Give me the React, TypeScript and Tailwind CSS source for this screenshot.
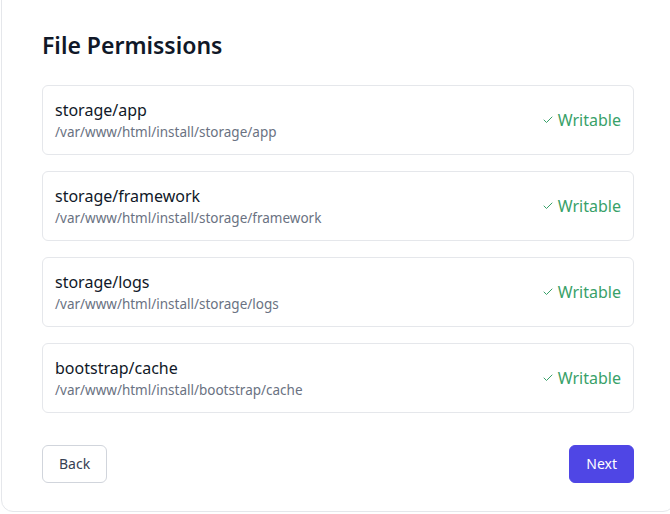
import { Check } from 'lucide-react';

type Perm = {
  name: string;
  path: string;
};

const perms: Perm[] = [
  { name: 'storage/app', path: '/var/www/html/install/storage/app' },
  { name: 'storage/framework', path: '/var/www/html/install/storage/framework' },
  { name: 'storage/logs', path: '/var/www/html/install/storage/logs' },
  { name: 'bootstrap/cache', path: '/var/www/html/install/bootstrap/cache' },
];

function PermRow({ perm }: { perm: Perm }) {
  return (
    <div className="flex items-center justify-between rounded-md border border-gray-200 bg-white px-3 py-3">
      <div>
        <div className="text-base leading-6 text-gray-900">{perm.name}</div>
        <div className="text-[13.5px] leading-5 text-gray-500">{perm.path}</div>
      </div>
      <div className="flex items-center gap-1 text-base text-[#38a169]">
        <Check size={12} strokeWidth={2} />
        <span>Writable</span>
      </div>
    </div>
  );
}

export default function App() {
  return (
    <div
      className="min-h-[514px] overflow-hidden bg-white"
      style={{ fontFamily: '"Noto Sans", sans-serif' }}
    >
      <div className="-mt-3 ml-px w-[674px] rounded-xl border border-gray-200 bg-white px-10 pt-10 pb-7">
        <h1 className="mb-6 text-[23px] leading-8 font-semibold text-gray-900">File Permissions</h1>

        <div className="space-y-4">
          {perms.map((p) => (
            <PermRow key={p.name} perm={p} />
          ))}
        </div>

        <div className="mt-8 flex justify-between">
          <button className="rounded-md border border-gray-300 bg-white px-4 py-2 text-sm text-gray-700">
            Back
          </button>
          <button className="rounded-md border border-[#4f46e5] bg-[#4f46e5] px-4 py-2 text-sm text-white">
            Next
          </button>
        </div>
      </div>
    </div>
  );
}
